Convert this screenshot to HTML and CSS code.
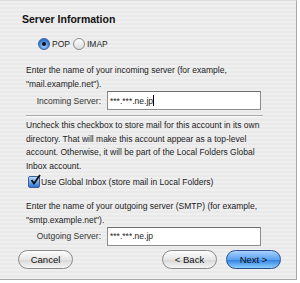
FILE: index.html
```html
<!DOCTYPE html>
<html lang="en">
<head>
  <meta charset="UTF-8" />
  <title>Server Information</title>
  <link rel="stylesheet" href="styles.css">
</head>
<body>

<div class="wizard">
  <h1>Server Information</h1>

  <div class="radios">
    <label class="radio"><span class="dot checked"></span>POP</label>
    <label class="radio"><span class="dot"></span>IMAP</label>
  </div>

  <p class="help">Enter the name of your incoming server (for example, "mail.example.net").</p>

  <div class="field">
    <span class="label">Incoming Server:</span>
    <span class="input">***.***.ne.jp<span class="caret"></span></span>
  </div>

  <div class="sep"></div>

  <p class="help tight">Uncheck this checkbox to store mail for this account in its own directory. That will make this account appear as a top-level account. Otherwise, it will be part of the Local Folders Global Inbox account.</p>

  <label class="check">
    <span class="box">
      <svg width="12" height="12" viewBox="0 0 12 12"><path d="M2.5 6 L5 9.5 L11 1" fill="none" stroke="#111" stroke-width="1.8"/></svg>
    </span>
    Use Global Inbox (store mail in Local Folders)
  </label>

  <p class="help outgoing">Enter the name of your outgoing server (SMTP) (for example, "smtp.example.net").</p>

  <div class="field">
    <span class="label">Outgoing Server:</span>
    <span class="input">***.***.ne.jp</span>
  </div>

  <div class="buttons">
    <button class="btn">Cancel</button>
    <span class="spacer"></span>
    <button class="btn">&lt; Back</button>
    <button class="btn default">Next &gt;</button>
  </div>
</div>

</body>
</html>
```

FILE: styles.css
```css
body {
  margin: 0;
  padding: 0;
  font-family: 'Liberation Sans', Arial, sans-serif;
  color: #222;
  background: #fff;
}
.wizard {
  width: 297px;
  height: 280px;
  box-sizing: border-box;
  border-top: 1px solid #dcdcdc;
  border-right: 1px solid #a8a8a8;
  border-bottom: 1px solid #a8a8a8;
  background: repeating-linear-gradient(#efefef 0 2px, #e9e9e9 2px 4px);
  padding: 11px 0 0 0;
  display: flex;
  flex-direction: column;
}
h1 {
  font-size: 10.5px;
  font-weight: bold;
  margin: 0 0 0 22px;
  line-height: 14px;
  color: #111;
}
.radios {
  display: flex;
  gap: 3px;
  margin: 12px 0 0 38px;
  font-size: 8.5px;
  height: 12px;
}
.radio {
  display: flex;
  align-items: center;
  gap: 2px;
}
.dot {
  width: 12px;
  height: 12px;
  box-sizing: border-box;
  border-radius: 50%;
  border: 1px solid #8a8a8a;
  background: linear-gradient(#fdfdfd, #dcdcdc);
  display: flex;
  align-items: center;
  justify-content: center;
}
.dot.checked {
  border-color: #3b5f9a;
  background: radial-gradient(circle at 50% 70%, #9ed0ff, #2f74d0 70%);
}
.dot.checked::after {
  content: '';
  width: 4px;
  height: 4px;
  border-radius: 50%;
  background: #111;
}
.help {
  font-size: 8.5px;
  line-height: 14px;
  margin: 13px 0 0 26px;
  width: 238px;
}
.help.tight {
  line-height: 13.7px;
  margin-top: 2px;
}
.help.outgoing {
  margin-top: 11px;
}
.field {
  display: flex;
  align-items: center;
  font-size: 8.5px;
}
.label {
  width: 101px;
  text-align: right;
  color: #333;
}
.input {
  margin-left: 6px;
  width: 154px;
  height: 19px;
  box-sizing: border-box;
  border: 1px solid #8c8c8c;
  border-top-color: #6e6e6e;
  background: #fff;
  padding: 3px 2px 0;
  font-size: 8.5px;
}
.caret {
  display: inline-block;
  width: 1px;
  height: 11px;
  background: #000;
  vertical-align: -2px;
}
.sep {
  margin: 5px 0 0 26px;
  width: 237px;
  height: 1px;
  background: #a9a9a9;
  border-bottom: 1px solid #fafafa;
}
.check {
  display: flex;
  align-items: center;
  gap: 1px;
  margin: 2px 0 0 28px;
  font-size: 8.5px;
  height: 12px;
}
.box {
  width: 12px;
  height: 12px;
  box-sizing: border-box;
  border: 1px solid #3b5f9a;
  border-radius: 2px;
  background: linear-gradient(#b9dcff, #2f74d0);
  position: relative;
}
.box svg {
  position: absolute;
  left: 0;
  top: -3px;
}
.buttons {
  display: flex;
  gap: 9px;
  margin: 4px 0 0 18px;
  width: 263px;
}
.spacer {
  flex: 1;
}
.btn {
  width: 55px;
  height: 19px;
  border-radius: 10px;
  border: 1px solid #8a8a8a;
  background: linear-gradient(#fdfdfd, #e6e6e6 50%, #d6d6d6 51%, #f6f6f6);
  font-family: 'Liberation Sans', Arial, sans-serif;
  font-size: 9.5px;
  color: #111;
  padding: 0;
}
.btn.default {
  border-color: #2b4f8a;
  background: linear-gradient(#a9d2ff, #5aa2f0 50%, #2f7ee0 51%, #8cd0ff);
}
```
